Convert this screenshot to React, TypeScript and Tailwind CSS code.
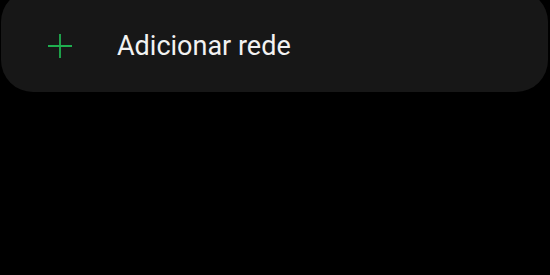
export default function App() {
  return (
    <div className="h-[275px] w-[550px] overflow-hidden bg-black" style={{ fontFamily: "Roboto, sans-serif" }}>
      <div className="-mt-[10px] ml-px flex h-[102px] w-[547px] items-center rounded-[32px] bg-[#171717] pt-[10px]">
        <div className="ml-[46px] flex h-[26px] w-[26px] items-center justify-center">
          <svg width="26" height="26" viewBox="0 0 26 26" fill="none">
            <path d="M13 1v24M1 13h24" stroke="#1fae4f" strokeWidth="1.8" />
          </svg>
        </div>
        <span className="ml-[44px] text-[27px] leading-none text-[#f2f2f2]">Adicionar rede</span>
      </div>
    </div>
  );
}
